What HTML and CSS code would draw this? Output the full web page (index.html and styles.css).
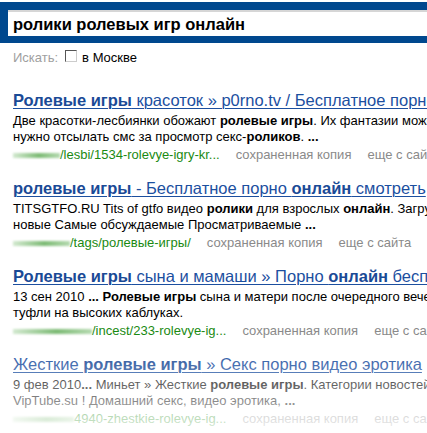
FILE: index.html
```html
<!DOCTYPE html>
<html lang="ru">
<head>
<meta charset="utf-8">
<link rel="stylesheet" href="styles.css">
</head>
<body>
<div class="page">
  <div class="bar">
    <div class="input">ролики ролевых игр онлайн</div>
  </div>
  <div class="where">
    <span class="lbl">Искать:</span>
    <span class="box"></span>
    <span class="city">в Москве</span>
  </div>
  <div class="results">
    <div class="res">
      <div class="title"><b>Ролевые игры</b> красоток » p0rno.tv / Бесплатное порно онлайн</div>
      <div class="snip">
        <div class="ln">Две красотки-лесбиянки обожают <b>ролевые игры</b>. Их фантазии может оценить каждый, не</div>
        <div class="ln">нужно отсылать смс за просмотр секс-<b>роликов</b>. <b>...</b></div>
      </div>
      <div class="meta"><span class="blur w1"></span><span class="url">/lesbi/1534-rolevye-igry-kr...</span><span class="lnk">сохраненная копия</span><span class="lnk">еще с сайта</span></div>
    </div>
    <div class="res">
      <div class="title"><b>ролевые игры</b> - Бесплатное порно <b>онлайн</b> смотреть</div>
      <div class="snip">
        <div class="ln">TITSGTFO.RU Tits of gtfo видео <b>ролики</b> для взрослых <b>онлайн</b>. Загрузить</div>
        <div class="ln">новые Самые обсуждаемые Просматриваемые <b>...</b></div>
      </div>
      <div class="meta"><span class="blur w2"></span><span class="url">/tags/ролевые-игры/</span><span class="lnk">сохраненная копия</span><span class="lnk">еще с сайта</span></div>
    </div>
    <div class="res">
      <div class="title"><b>Ролевые игры</b> сына и мамаши » Порно <b>онлайн</b> бесплатно</div>
      <div class="snip">
        <div class="ln">13 сен 2010 <b>... Ролевые игры</b> сына и матери после очередного вечера</div>
        <div class="ln">туфли на высоких каблуках.</div>
      </div>
      <div class="meta"><span class="blur w3"></span><span class="url">/incest/233-rolevye-ig...</span><span class="lnk">сохраненная копия</span><span class="lnk">еще с сайта</span></div>
    </div>
    <div class="res">
      <div class="title">Жесткие <b>ролевые игры</b> » Секс порно видео эротика</div>
      <div class="snip">
        <div class="ln">9 фев 2010<b>...</b> Миньет » Жесткие <b>ролевые игры</b>. Категории новостей</div>
        <div class="ln">VipTube.su ! Домашний секс, видео эротика, <b>...</b></div>
      </div>
      <div class="meta"><span class="blur w4"></span><span class="url">4940-zhestkie-rolevye-ig...</span><span class="lnk">сохраненная копия</span><span class="lnk">еще с сайта</span></div>
    </div>
  </div>
  <div class="fade"></div>
</div>
</body>
</html>
```
FILE: styles.css
```css
html, body {
  margin: 0;
  padding: 0;
  background: #fff;
}
body {
  width: 427px;
  height: 433px;
  overflow: hidden;
  font-family: "Liberation Sans", Arial, sans-serif;
}
.page {
  position: relative;
  width: 427px;
  height: 433px;
  overflow: hidden;
}
.bar {
  margin-top: 2px;
  background: #00488e;
  padding: 8px 0 7px 8px;
}
.input {
  background: #fff;
  border-top: 2px solid #d6d6d6;
  height: 24px;
  line-height: 24px;
  padding-left: 5px;
  font-size: 16.5px;
  font-weight: bold;
  color: #000;
  white-space: nowrap;
}
.where {
  display: flex;
  align-items: center;
  height: 16px;
  margin-top: 6px;
  padding-left: 13px;
  font-size: 13px;
  color: #000;
}
.lbl {
  color: #a0a0a0;
}
.box {
  width: 10px;
  height: 10px;
  border: 1px solid #555;
  border-right-color: #ccc;
  border-bottom-color: #ccc;
  margin: 0 5px 2px 7px;
  background: #fff;
}
.results {
  padding: 25px 0 0 13px;
  display: flex;
  flex-direction: column;
  gap: 15px;
}
.res {
  white-space: nowrap;
}
.title {
  font-size: 16.5px;
  line-height: 20px;
  color: #1c4f9f;
  text-decoration: underline;
  text-decoration-thickness: 1px;
  text-underline-offset: 2px;
}
.title b {
  color: #1a4a96;
}
.snip {
  margin-top: 3px;
  font-size: 13px;
  line-height: 16px;
  color: #000;
}
.ln {
  white-space: nowrap;
}
.meta {
  display: flex;
  align-items: center;
  height: 18px;
  font-size: 13px;
  color: #8a8a8a;
}
.meta > span {
  flex-shrink: 0;
}
.blur {
  display: inline-block;
  height: 5px;
  margin-top: 2px;
  background: linear-gradient(90deg, #d3e9d0, #7dbb75 55%, #b5dab0);
  filter: blur(1.2px);
}
.w1 { width: 47px; }
.w2 { width: 57px; }
.w3 { width: 79px; }
.w4 { width: 61px; }
.url {
  color: #1a8a12;
}
.lnk {
  margin-left: 16px;
}
.fade {
  position: absolute;
  left: 0;
  right: 0;
  top: 345px;
  height: 88px;
  background: linear-gradient(180deg, rgba(255,255,255,0), rgba(255,255,255,0.85));
  pointer-events: none;
}
```
